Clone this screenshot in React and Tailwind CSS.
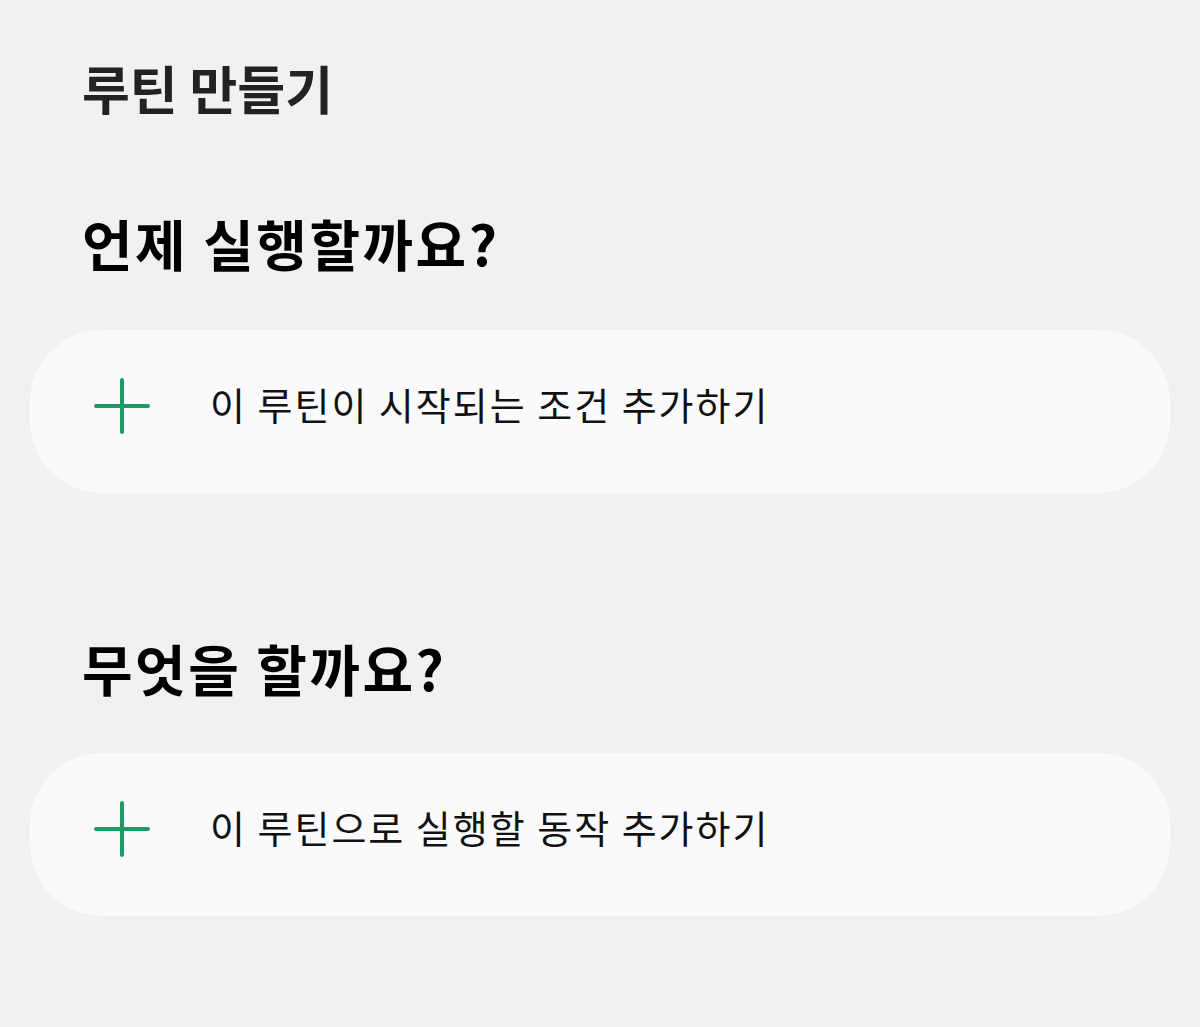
import React from 'react';

// Plus icon drawn to match the thin green cross
const PlusIcon = () => (
  <svg width="56" height="56" viewBox="0 0 56 56" fill="none">
    <path d="M28 2v52M2 28h52" stroke="#1f9a62" strokeWidth="4" strokeLinecap="round" />
  </svg>
);

const AddCard = ({ label }) => (
  <div className="mx-[30px] h-[163px] rounded-[72px] bg-[#fafafc] flex items-center pl-[64px] pb-[12px]">
    <PlusIcon />
    <span className="ml-[60px] mb-[4px] text-[38px] tracking-[2px] text-[#111] leading-none">{label}</span>
  </div>
);

const App = () => {
  return (
    <div
      className="w-[1200px] h-[1027px] bg-[#f1f1f3] overflow-hidden"
      style={{ fontFamily: '"Noto Sans CJK KR", "Noto Sans", sans-serif' }}
    >
      {/* Page title */}
      <div className="pl-[82px] pt-[62px] text-[52px] font-bold text-[#222] leading-none">
        루틴 만들기
      </div>

      {/* Trigger section */}
      <div className="pl-[82px] mt-[101px] text-[55px] tracking-[2.5px] font-bold text-black leading-none">
        언제 실행할까요?
      </div>
      <div className="mt-[60px]">
        <AddCard label="이 루틴이 시작되는 조건 추가하기" />
      </div>

      {/* Action section */}
      <div className="pl-[82px] mt-[147px] text-[55px] tracking-[2.5px] font-bold text-black leading-none">
        무엇을 할까요?
      </div>
      <div className="mt-[58px]">
        <AddCard label="이 루틴으로 실행할 동작 추가하기" />
      </div>
    </div>
  );
};

export default App;
